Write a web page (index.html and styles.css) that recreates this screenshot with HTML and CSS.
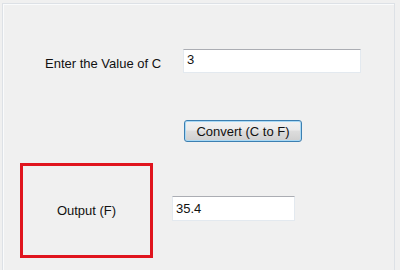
FILE: index.html
```html
<!DOCTYPE html>
<html lang="en">
<head>
  <meta charset="UTF-8">
  <title>Celsius to Fahrenheit</title>
  <link rel="stylesheet" href="styles.css">
</head>
<body>

  <div class="window">
    <div class="row first">
      <label class="label" for="celsius">Enter the Value of C</label>
      <input class="field wide" id="celsius" type="text" value="3">
    </div>

    <div class="row second">
      <button class="convert">Convert (C to F)</button>
    </div>

    <div class="row third">
      <div class="highlight">
        <span>Output (F)</span>
      </div>
      <input class="field narrow" type="text" value="35.4">
    </div>
  </div>

</body>
</html>
```

FILE: styles.css
```css
body {
  margin: 0;
  background: #f0f0f0;
  font-family: 'Liberation Sans', Arial, sans-serif;
  font-size: 13px;
  color: #111;
  overflow: hidden;
}

.window {
  margin: 3px 5px 0 2px;
  height: 267px;
  border: 1px solid #dde1e6;
  border-bottom: none;
  box-sizing: border-box;
  box-shadow: inset 1px 1px 0 #fafbfc;
}

.row {
  display: flex;
  align-items: flex-start;
}

.first {
  padding-top: 45px;
}

.label {
  width: 138px;
  margin-left: 42px;
  margin-top: 7px;
  line-height: 16px;
}

.field {
  box-sizing: border-box;
  background: #fff;
  border: 1px solid #e3e9ef;
  border-top-color: #abadb3;
  font-family: inherit;
  font-size: 13px;
  padding: 0 3px;
  margin: 0;
  color: #111;
}

.wide {
  width: 178px;
  height: 24px;
  padding-bottom: 3px;
}

.narrow {
  width: 123px;
  height: 25px;
  margin-left: 19px;
  margin-top: 33px;
}

.second {
  margin-top: 47px;
  padding-left: 181px;
}

.convert {
  width: 118px;
  height: 22px;
  font-family: inherit;
  font-size: 13px;
  color: #111;
  border: 1px solid #3c7fb1;
  border-radius: 3px;
  background: linear-gradient(#f2f2f2 0%, #ebebeb 45%, #dddddd 50%, #cfcfcf 100%);
  box-shadow: inset 0 0 0 1px #a9d9f5;
  padding: 0;
}

.third {
  margin-top: 21px;
  padding-left: 17px;
}

.highlight {
  width: 133px;
  height: 95px;
  box-sizing: border-box;
  border: 3px solid #e0141e;
  display: flex;
  justify-content: center;
  align-items: center;
}
```
